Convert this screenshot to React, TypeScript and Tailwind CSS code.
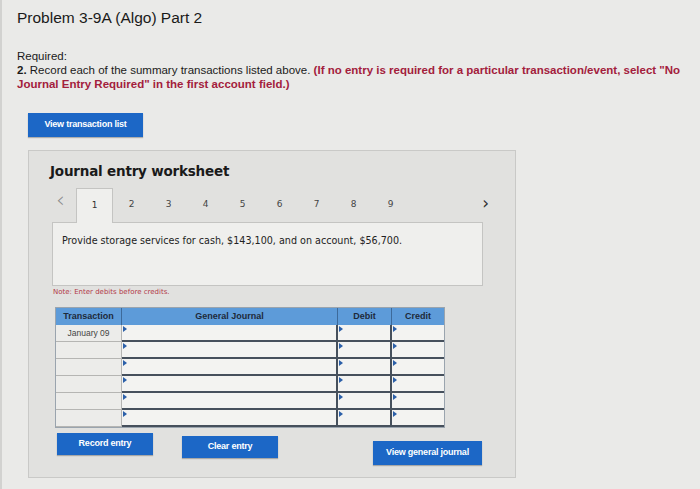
import React from "react";

const tabs = ["1", "2", "3", "4", "5", "6", "7", "8", "9"];
const rows = ["January 09", "", "", "", "", ""];

const Marker = () => (
  <span className="absolute left-[1px] top-[1px] w-0 h-0 border-t-[3px] border-b-[3px] border-l-[4px] border-t-transparent border-b-transparent border-l-[#2b5fa8]" />
);

const BlueButton = ({ label, className }: { label: string; className: string }) => (
  <button
    className={`bg-[#1c67c6] text-white font-bold text-[9px] tracking-tight shadow-[0_1px_1px_rgba(0,0,0,0.25)] ${className}`}
    style={{ fontFamily: "'Liberation Sans', Arial, sans-serif" }}
  >
    {label}
  </button>
);

export default function App() {
  return (
    <div
      className="w-[700px] h-[489px] bg-[#eaeae8] border-l-2 border-[#d2d2d0] overflow-hidden text-[#1a1a1a]"
      style={{ fontFamily: "'Liberation Sans', Arial, sans-serif" }}
    >
      <div className="pl-[15px] pt-[8px]">
        <h1 className="text-[15.5px] font-medium leading-[20px]">Problem 3-9A (Algo) Part 2</h1>

        <div className="mt-[21px] text-[11.5px] leading-[14px]">
          <div>Required:</div>
          <div className="pr-[4px]">
            <b>2.</b> Record each of the summary transactions listed above.{" "}
            <b className="text-[#a3203c]">
              (If no entry is required for a particular transaction/event, select "No Journal Entry Required" in the
              first account field.)
            </b>
          </div>
        </div>

        <BlueButton label="View transaction list" className="mt-[22px] ml-[11px] w-[115px] h-[24px]" />

        <div
          className="mt-[13px] ml-[11px] w-[488px] h-[328px] bg-[#e1e1df] border border-[#c9c9c7] pl-[21px] pr-[30px] pt-[10px]"
          style={{ fontFamily: "'DejaVu Sans', Verdana, sans-serif" }}
        >
          <h2 className="text-[13.5px] font-bold leading-[20px] tracking-[-0.2px]">Journal entry worksheet</h2>

          <div className="mt-[7px] flex items-end h-[34px]">
            <span className="w-[26px] pl-[6px] pb-[11px] text-[#8a8a8a] text-[22px] font-light leading-none">‹</span>
            <div className="w-[37px] h-[35px] bg-[#efefed] border border-b-0 border-[#c4c4c2] flex items-center justify-center text-[9px] text-[#333] relative z-10 -mb-px">
              1
            </div>
            {tabs.slice(1).map((t) => (
              <div key={t} className="w-[37px] h-[34px] flex items-center justify-center text-[9px] text-[#444]">
                {t}
              </div>
            ))}
            <span className="ml-auto mr-[-4px] pb-[10px] text-[#333] text-[17px] leading-none">›</span>
          </div>

          <div className="ml-[2px] w-[431px] h-[64px] bg-[#efefed] border border-[#c4c4c2] px-[9px] pt-[11px] text-[9.6px] text-[#222]">
            Provide storage services for cash, $143,100, and on account, $56,700.
          </div>

          <div className="mt-[1px] ml-[3px] text-[7px] text-[#b23a48] leading-[10px]">Note: Enter debits before credits.</div>

          <div
            className="mt-[10px] ml-[5px] w-[390px] border border-[#9aa4ae]"
            style={{ fontFamily: "'Liberation Sans', Arial, sans-serif" }}
          >
            <div className="flex h-[17px] bg-[#5d9bd9] text-[9px] font-bold text-[#1d2a3a]">
              <div className="w-[66px] flex items-center justify-center border-r border-[#3d6a9a]">Transaction</div>
              <div className="w-[216px] flex items-center justify-center border-r border-[#3d6a9a]">General Journal</div>
              <div className="w-[54px] flex items-center justify-center border-r border-[#3d6a9a]">Debit</div>
              <div className="flex-1 flex items-center justify-center">Credit</div>
            </div>
            {rows.map((r, i) => (
              <div key={i} className="flex h-[17px]">
                <div className="w-[66px] bg-[#ececea] border-r border-b border-[#b5b5b3] flex items-center justify-center text-[8.5px] text-[#444]">
                  {r}
                </div>
                <div className="w-[216px] bg-[#f3f3f1] border-r-2 border-b-2 border-[#46505c] relative">
                  <Marker />
                </div>
                <div className="w-[54px] bg-[#f3f3f1] border-r-2 border-b-2 border-[#46505c] relative">
                  <Marker />
                </div>
                <div className="flex-1 bg-[#f3f3f1] border-b-2 border-[#46505c] relative">
                  <Marker />
                </div>
              </div>
            ))}
          </div>

          <div className="mt-[5px] ml-[7px] flex items-start">
            <BlueButton label="Record entry" className="w-[96px] h-[22px]" />
            <BlueButton label="Clear entry" className="ml-[29px] mt-[3px] w-[96px] h-[22px]" />
            <BlueButton label="View general journal" className="ml-[95px] mt-[8px] w-[109px] h-[24px]" />
          </div>
        </div>
      </div>
    </div>
  );
}
